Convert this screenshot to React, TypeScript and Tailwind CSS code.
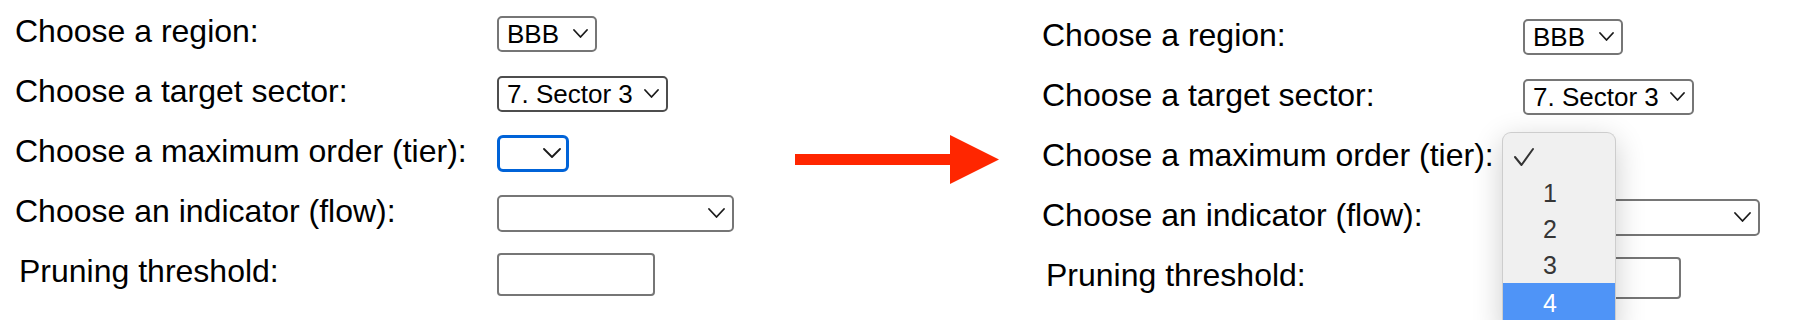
import React from "react";

const Chevron = ({ w = 15, h = 8 }: { w?: number; h?: number }) => (
  <svg width={w} height={h + 2} viewBox={`0 0 ${w} ${h + 2}`} fill="none">
    <polyline
      points={`1,1 ${w / 2},${h} ${w - 1},1`}
      stroke="#1a1a1a"
      strokeWidth="1.8"
      strokeLinecap="round"
      strokeLinejoin="round"
    />
  </svg>
);

type SelProps = {
  width: string;
  text?: string;
  variant?: "normal" | "dark" | "focus";
  tall?: boolean;
  chevW?: number;
};

const FakeSelect = ({ width, text, variant = "normal", tall, chevW = 15 }: SelProps) => {
  const border =
    variant === "focus"
      ? "border-[3px] border-[#0063d8] rounded-[6px] pr-[5px]"
      : variant === "dark"
      ? "border-2 border-[#4d4d4d] rounded-[5px] pr-[7px]"
      : "border-2 border-[#767676] rounded-[5px] pr-[7px]";
  return (
    <div
      className={`${width} ${tall ? "h-[37px]" : "h-[36px]"} ${border} flex items-center justify-between bg-white pl-[8px] text-[26px] leading-none text-black`}
    >
      <span className="pb-[1px]">{text ?? ""}</span>
      <Chevron w={chevW} h={variant === "focus" || chevW > 15 ? 9 : 8} />
    </div>
  );
};

const TextBox = ({ h }: { h: string }) => (
  <div className={`w-[158px] ${h} rounded-[4px] border-2 border-[#767676] bg-white`} />
);

const Label = ({ children, w, indent }: { children: React.ReactNode; w: string; indent?: boolean }) => (
  <div className={`${w} shrink-0 text-[32px] leading-[37px] text-black ${indent ? "pl-[4px]" : ""}`}>
    {children}
  </div>
);

const Popup = () => (
  <div className="absolute left-[-21px] top-[-6px] z-10 h-[200px] w-[114px] overflow-hidden rounded-t-[9px] border border-b-0 border-[#cdcdcd] bg-[#f0f0f0] pt-[6px] shadow-[0_8px_30px_rgba(0,0,0,0.2)]">
    <div className="flex h-[36px] items-center pl-[10px]">
      <svg width="22" height="20" viewBox="0 0 22 20" fill="none">
        <polyline
          points="2,10 8.5,18 20,2"
          stroke="#333"
          strokeWidth="2"
          strokeLinecap="round"
          strokeLinejoin="round"
        />
      </svg>
    </div>
    {["1", "2", "3"].map((n) => (
      <div key={n} className="flex h-[36px] items-center pl-[40px] text-[25px] leading-none text-[#363636]">
        {n}
      </div>
    ))}
    <div className="h-[50px] bg-[#4f94f7] pl-[40px] pt-[8px] text-[25px] leading-none text-white">4</div>
  </div>
);

export default function App() {
  return (
    <div className="flex h-[320px] w-[1800px] items-start overflow-hidden bg-white font-['Liberation_Sans',Arial,Helvetica,sans-serif]">
      {/* Left form */}
      <div className="w-[795px] shrink-0 pl-[15px] pt-[13px]">
        <div className="flex h-[60px] items-start">
          <Label w="w-[482px]">Choose a region:</Label>
          <div className="mt-[3px]">
            <FakeSelect width="w-[100px]" text="BBB" />
          </div>
        </div>
        <div className="flex h-[60px] items-start">
          <Label w="w-[482px]">Choose a target sector:</Label>
          <div className="mt-[3px]">
            <FakeSelect width="w-[171px]" text="7. Sector 3" variant="dark" />
          </div>
        </div>
        <div className="flex h-[60px] items-start">
          <Label w="w-[482px]">Choose a maximum order (tier):</Label>
          <div className="mt-[2px]">
            <FakeSelect width="w-[72px]" variant="focus" tall chevW={18} />
          </div>
        </div>
        <div className="flex h-[60px] items-start">
          <Label w="w-[482px]">Choose an indicator (flow):</Label>
          <div className="mt-[2px]">
            <FakeSelect width="w-[237px]" tall chevW={17} />
          </div>
        </div>
        <div className="flex h-[60px] items-start">
          <Label w="w-[482px]" indent>
            Pruning threshold:
          </Label>
          <TextBox h="h-[43px]" />
        </div>
      </div>

      {/* Arrow */}
      <div className="mt-[135px] shrink-0">
        <svg width="204" height="49" viewBox="0 0 204 49">
          <rect x="0" y="19" width="156" height="11" fill="#ff2600" />
          <polygon points="155,0 204,24.5 155,49" fill="#ff2600" />
        </svg>
      </div>

      {/* Right form */}
      <div className="ml-[43px] shrink-0 pt-[17px]">
        <div className="flex h-[60px] items-start">
          <Label w="w-[481px]">Choose a region:</Label>
          <div className="mt-[2px]">
            <FakeSelect width="w-[100px]" text="BBB" />
          </div>
        </div>
        <div className="flex h-[60px] items-start">
          <Label w="w-[481px]">Choose a target sector:</Label>
          <div className="mt-[2px]">
            <FakeSelect width="w-[171px]" text="7. Sector 3" />
          </div>
        </div>
        <div className="flex h-[60px] items-start">
          <Label w="w-[481px]">Choose a maximum order (tier):</Label>
          <div className="relative mt-[1px]">
            <FakeSelect width="w-[72px]" tall chevW={17} />
            <Popup />
          </div>
        </div>
        <div className="flex h-[60px] items-start">
          <Label w="w-[481px]">Choose an indicator (flow):</Label>
          <div className="mt-[2px]">
            <FakeSelect width="w-[237px]" tall chevW={17} />
          </div>
        </div>
        <div className="flex h-[60px] items-start">
          <Label w="w-[481px]" indent>
            Pruning threshold:
          </Label>
          <TextBox h="h-[42px]" />
        </div>
      </div>
    </div>
  );
}
